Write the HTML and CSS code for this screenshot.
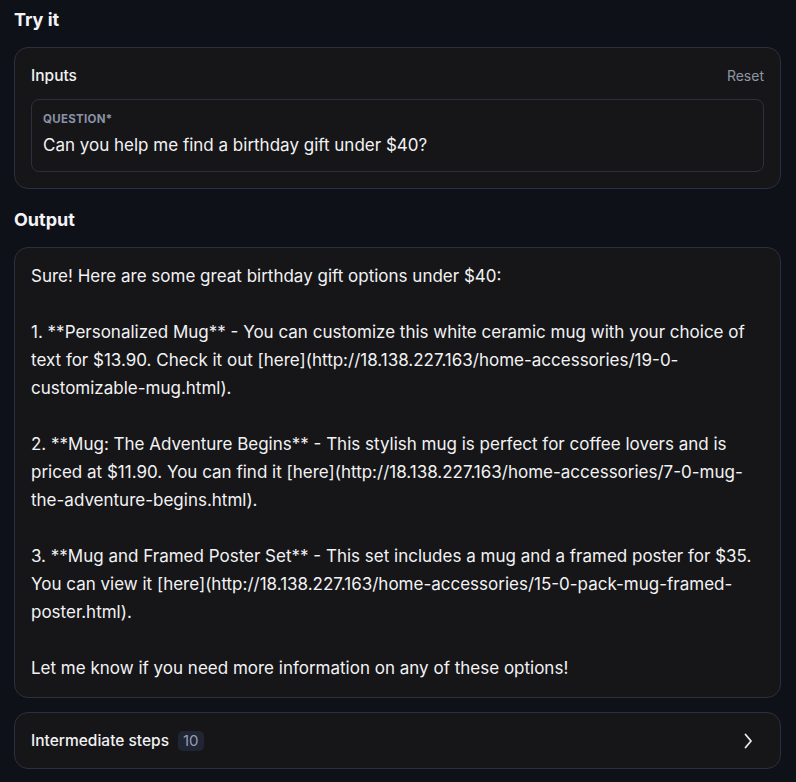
FILE: index.html
```html
<!DOCTYPE html>
<html>
<head>
<meta charset="utf-8">
<link rel="stylesheet" href="styles.css">
</head>
<body>
<main class="page">
  <h2 class="heading heading-try">Try it</h2>
  <section class="card inputs">
    <div class="inputs-head">
      <span class="inputs-title">Inputs</span>
      <span class="reset">Reset</span>
    </div>
    <div class="field">
      <div class="field-label">QUESTION*</div>
      <div class="field-value">Can you help me find a birthday gift under $40?</div>
    </div>
  </section>
  <h2 class="heading heading-output">Output</h2>
  <section class="card output">
    <p>Sure! Here are some great birthday gift options under $40:</p>
    <p>1. **Personalized Mug** - You can customize this white ceramic mug with your choice of text for $13.90. Check it out [here](http://18.138.227.163/home-accessories/19-0-customizable-mug.html).</p>
    <p>2. **Mug: The Adventure Begins** - This stylish mug is perfect for coffee lovers and is priced at $11.90. You can find it [here](http://18.138.227.163/home-accessories/7-0-mug-the-adventure-begins.html).</p>
    <p>3. **Mug and Framed Poster Set** - This set includes a mug and a framed poster for $35. You can view it [here](http://18.138.227.163/home-accessories/15-0-pack-mug-framed-poster.html).</p>
    <p>Let me know if you need more information on any of these options!</p>
  </section>
  <section class="card steps">
    <div class="steps-left">
      <span class="steps-title">Intermediate steps</span>
      <span class="badge">10</span>
    </div>
    <svg class="chevron" width="20" height="20" viewBox="0 0 20 20" fill="none"><path d="M7.5 3.5 L13 10 L7.5 16.5" stroke="#ececee" stroke-width="1.8" stroke-linecap="round" stroke-linejoin="round"/></svg>
  </section>
</main>
</body>
</html>
```

FILE: styles.css
```css
html, body {
  margin: 0;
  padding: 0;
  background: #0f1118;
}
body {
  font-family: Inter, "Noto Sans", sans-serif;
  color: #f2f2f4;
  width: 796px;
  height: 782px;
  overflow: hidden;
}
.page {
  display: flex;
  flex-direction: column;
  padding: 0 15px 0 14px;
}
.heading {
  margin: 0;
  font-size: 18px;
  font-weight: 700;
  line-height: 24px;
  color: #f4f4f6;
}
.heading-try {
  margin-top: 8px;
  margin-bottom: 15px;
}
.heading-output {
  margin-top: 19px;
  margin-bottom: 15px;
}
.card {
  background: #161618;
  border: 1px solid #2a303d;
  border-radius: 14px;
}
.inputs {
  padding: 16px;
  display: flex;
  flex-direction: column;
  gap: 13px;
}
.inputs-head {
  display: flex;
  justify-content: space-between;
  align-items: center;
  height: 22px;
}
.inputs-title {
  font-size: 15.5px;
  font-weight: 500;
  color: #f2f2f4;
}
.reset {
  font-size: 14px;
  color: #8e95a3;
}
.field {
  border: 1px solid #2a303d;
  border-radius: 8px;
  padding: 11px 12px 13px 11px;
  display: flex;
  flex-direction: column;
  gap: 5px;
}
.field-label {
  font-size: 11.5px;
  font-weight: 700;
  letter-spacing: 0.3px;
  color: #8a92a6;
  line-height: 16px;
}
.field-value {
  font-size: 17px;
  line-height: 26px;
  color: #f2f2f4;
}
.output {
  padding: 14px 16px 15px 16px;
  font-size: 17px;
  line-height: 28px;
}
.output p {
  margin: 0 0 28px 0;
}
.output p:last-child {
  margin-bottom: 0;
}
.steps {
  margin-top: 14px;
  height: 55px;
  display: flex;
  align-items: center;
  justify-content: space-between;
  padding: 0 22px 0 16px;
}
.steps-left {
  display: flex;
  align-items: center;
  gap: 9px;
}
.steps-title {
  font-size: 15.5px;
  font-weight: 500;
}
.badge {
  background: #1f2533;
  color: #959db0;
  font-size: 15px;
  border-radius: 5px;
  padding: 1px 5px;
  line-height: 18px;
}
.chevron {
  display: block;
}
```
